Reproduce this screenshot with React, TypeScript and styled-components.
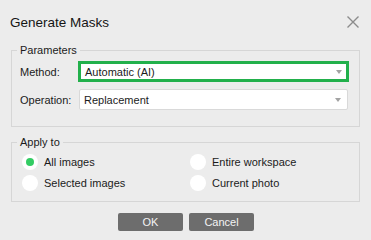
import React from "react";
import styled, { createGlobalStyle } from "styled-components";

const Global = createGlobalStyle`
  html, body { margin: 0; padding: 0; background: #ececec; }
  body { font-family: "Liberation Sans", Arial, sans-serif; color: #1b1b1b; }
`;

const Dialog = styled.div`
  width: 371px;
  height: 240px;
  background: #ececec;
  box-sizing: border-box;
  display: flex;
  flex-direction: column;
`;

const Header = styled.div`
  height: 43px;
  display: flex;
  align-items: center;
  justify-content: space-between;
  padding: 0 12px 0 10px;
  box-sizing: border-box;
`;

const Title = styled.div`
  font-size: 13.5px;
  color: #151515;
  padding-top: 1px;
`;

const Close = styled.button`
  border: 0;
  background: none;
  padding: 0;
  width: 12px;
  height: 12px;
  display: flex;
  margin-top: 1px;
`;

const Group = styled.fieldset<{ $gap?: number; $top?: number; $bottom?: number }>`
  margin: ${(p) => p.$gap ?? 0}px 11px 0 11px;
  border: 1px solid #d6d6d6;
  padding: ${(p) => p.$top ?? 4}px 10px ${(p) => p.$bottom ?? 16}px 8px;
  min-width: 0;
`;

const Legend = styled.legend`
  font-size: 11px;
  line-height: 14px;
  padding: 0 3px;
  margin-left: -3px;
  color: #1b1b1b;
`;

const FormGrid = styled.div`
  display: grid;
  grid-template-columns: 58px 1fr;
  row-gap: 7px;
  align-items: center;
`;

const Label = styled.span`
  font-size: 11px;
`;

const Select = styled.div<{ $active?: boolean }>`
  height: 21px;
  box-sizing: border-box;
  background: #fff;
  border: ${(p) => (p.$active ? "3px solid #22b04b" : "1px solid #d9d9d9")};
  border-radius: ${(p) => (p.$active ? "0" : "2px")};
  margin: ${(p) => (p.$active ? "0" : "0 1px")};
  display: flex;
  align-items: center;
  justify-content: space-between;
  padding: ${(p) => (p.$active ? "0 4px 0 4px" : "0 6px 0 4px")};
  font-size: 11px;
`;

const Arrow = styled.span`
  width: 0;
  height: 0;
  border-left: 3.5px solid transparent;
  border-right: 3.5px solid transparent;
  border-top: 4px solid #a3a3a3;
`;

const RadioGrid = styled.div`
  display: grid;
  grid-template-columns: 168px 1fr;
  grid-auto-rows: 21px;
  padding-top: 2px;
  margin-left: 2px;
`;

const RadioItem = styled.label`
  display: flex;
  align-items: center;
  gap: 6px;
  font-size: 11px;
`;

const RadioCircle = styled.span<{ $checked?: boolean }>`
  width: 16px;
  height: 16px;
  border-radius: 50%;
  background: #fff;
  display: flex;
  align-items: center;
  justify-content: center;
  &::after {
    content: "";
    width: 8px;
    height: 8px;
    border-radius: 50%;
    background: ${(p) => (p.$checked ? "#33cc63" : "transparent")};
  }
`;

const Buttons = styled.div`
  display: flex;
  justify-content: center;
  gap: 6px;
  margin-top: 11px;
  padding-left: 1px;
`;

const Button = styled.button`
  width: 65px;
  height: 18px;
  border: 0;
  border-radius: 2px;
  background: #6d6d6d;
  color: #f4f4f4;
  font-family: "Liberation Sans", Arial, sans-serif;
  font-size: 11px;
  padding: 0;
`;

export default function App() {
  return (
    <>
      <Global />
      <Dialog>
        <Header>
          <Title>Generate Masks</Title>
          <Close aria-label="Close">
            <svg width="12" height="12" viewBox="0 0 12 12">
              <path d="M0.5 0.5 L11.5 11.5 M11.5 0.5 L0.5 11.5" stroke="#8c8c8c" strokeWidth="1.4" fill="none" />
            </svg>
          </Close>
        </Header>
        <Group>
          <Legend>Parameters</Legend>
          <FormGrid>
            <Label>Method:</Label>
            <Select $active>
              <span>Automatic (AI)</span>
              <Arrow />
            </Select>
            <Label>Operation:</Label>
            <Select>
              <span>Replacement</span>
              <Arrow />
            </Select>
          </FormGrid>
        </Group>
        <Group $gap={8} $top={0} $bottom={8}>
          <Legend>Apply to</Legend>
          <RadioGrid>
            <RadioItem><RadioCircle $checked />All images</RadioItem>
            <RadioItem><RadioCircle />Entire workspace</RadioItem>
            <RadioItem><RadioCircle />Selected images</RadioItem>
            <RadioItem><RadioCircle />Current photo</RadioItem>
          </RadioGrid>
        </Group>
        <Buttons>
          <Button>OK</Button>
          <Button>Cancel</Button>
        </Buttons>
      </Dialog>
    </>
  );
}
